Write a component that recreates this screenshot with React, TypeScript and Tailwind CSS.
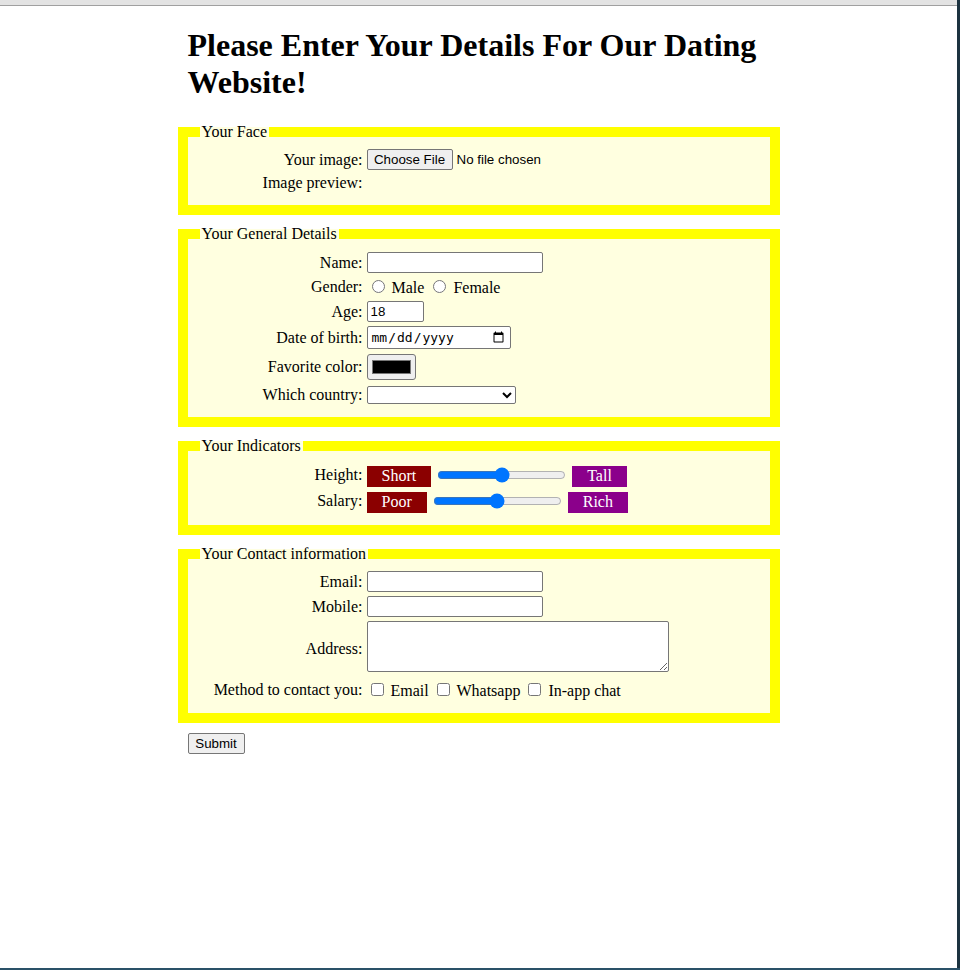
import React from "react";

const textInput =
  "h-[21px] w-[176px] rounded-[2px] border border-[#767676] bg-white px-[3px] font-['Liberation_Sans',Arial,sans-serif] text-[13.33px] text-black outline-none";

function Section({ title, children }: { title: string; children: React.ReactNode }) {
  return (
    <fieldset className="mx-[2px] mb-[10px] border-[10px] border-[#ffff00] bg-[#ffffe0] px-[12px] pt-[5.6px] pb-[10px]">
      <legend className="px-[2px]">{title}</legend>
      <div className="grid grid-cols-[160px_1fr] items-center gap-[4px] p-[3px]">{children}</div>
    </fieldset>
  );
}

function Label({ children }: { children: React.ReactNode }) {
  return <label className="text-right">{children}</label>;
}

export default function App() {
  return (
    <div className="flex h-[970px] w-[960px] flex-col overflow-hidden bg-white font-['Liberation_Serif','Times_New_Roman',serif] text-[16px] leading-[normal] text-black">
      <div className="flex min-h-0 flex-1">
        <div className="flex min-w-0 flex-1 flex-col">
          <div className="h-[6px] shrink-0 border-b border-[#a0a0a0] bg-[#e3e3e3]" />
          <div className="flex-1">
            <div className="mx-auto w-[606px]">
              <h1 className="my-[21.44px] pl-[12px] text-[32px] font-bold">
                Please Enter Your Details For Our Dating Website!
              </h1>
              <form onSubmit={(e) => e.preventDefault()}>
                <Section title="Your Face">
                  <Label>Your image:</Label>
                  <div className="flex h-[21px] items-center">
                    <input
                      type="file"
                      className="font-['Liberation_Sans',Arial,sans-serif] text-[13.33px] text-black file:mr-[4px] file:h-[21px] file:w-[86px] file:rounded-[2px] file:border file:border-[#767676] file:bg-[#efefef] file:px-[6px] file:text-black"
                    />
                  </div>
                  <Label>Image preview:</Label>
                  <div />
                </Section>

                <Section title="Your General Details">
                  <Label>Name:</Label>
                  <div className="flex items-center">
                    <input type="text" className={textInput} />
                  </div>
                  <Label>Gender:</Label>
                  <div>
                    <input type="radio" name="gender" className="mt-[3px] mr-[3px] ml-[5px]" /> Male{" "}
                    <input type="radio" name="gender" className="mt-[3px] mr-[3px] ml-[5px]" /> Female
                  </div>
                  <Label>Age:</Label>
                  <div className="flex items-center">
                    <input
                      type="number"
                      defaultValue={18}
                      className="h-[21px] w-[57px] rounded-[2px] border border-[#767676] bg-white px-[3px] font-['Liberation_Sans',Arial,sans-serif] text-[13.33px] text-black outline-none"
                    />
                  </div>
                  <Label>Date of birth:</Label>
                  <div className="flex h-[23px] items-center">
                    <input
                      type="date"
                      className="h-[23px] w-[144px] rounded-[2px] border border-[#767676] bg-white px-[3px] font-['DejaVu_Sans_Mono','Liberation_Mono',monospace] text-[13px] text-black outline-none"
                    />
                  </div>
                  <Label>Favorite color:</Label>
                  <div className="flex h-[28px] items-center">
                    <input
                      type="color"
                      defaultValue="#000000"
                      className="h-[26px] min-h-[26px] w-[49px] rounded-[3px] border border-[#767676] bg-[#efefef] px-[2px] py-px"
                    />
                  </div>
                  <Label>Which country:</Label>
                  <div className="flex h-[19px] items-center">
                    <select className="h-[18px] w-[149px] rounded-[2px] border border-[#767676] bg-white font-['Liberation_Sans',Arial,sans-serif] text-[13.33px] text-black outline-none">
                      <option value=""></option>
                      <option value="us">United States</option>
                      <option value="uk">United Kingdom</option>
                      <option value="in">India</option>
                      <option value="ca">Canada</option>
                    </select>
                  </div>
                </Section>

                <Section title="Your Indicators">
                  <Label>Height:</Label>
                  <div className="flex h-[22px] items-center gap-[4px]">
                    <span className="mt-[2px] inline-flex h-[21px] items-center self-start bg-[#8b0000] px-[15px] text-white">Short</span>
                    <input type="range" defaultValue={50} className="mx-[2px] w-[129px]" />
                    <span className="mt-[2px] inline-flex h-[21px] items-center self-start bg-[#8b008b] px-[15px] text-white">Tall</span>
                  </div>
                  <Label>Salary:</Label>
                  <div className="flex h-[22px] items-center gap-[4px]">
                    <span className="mt-[2px] inline-flex h-[21px] items-center self-start bg-[#8b0000] px-[15px] text-white">Poor</span>
                    <input type="range" defaultValue={50} className="mx-[2px] w-[129px]" />
                    <span className="mt-[2px] inline-flex h-[21px] items-center self-start bg-[#8b008b] px-[15px] text-white">Rich</span>
                  </div>
                </Section>

                <Section title="Your Contact information">
                  <Label>Email:</Label>
                  <div className="flex items-center">
                    <input type="email" className={textInput} />
                  </div>
                  <Label>Mobile:</Label>
                  <div className="flex items-center">
                    <input type="tel" className={textInput} />
                  </div>
                  <Label>Address:</Label>
                  <div className="flex h-[55px] items-start">
                    <textarea className="h-[51px] w-[302px] resize rounded-[2px] border border-[#767676] bg-white px-[2px] font-['Liberation_Mono',monospace] text-[13.33px] text-black outline-none" />
                  </div>
                  <Label>Method to contact you:</Label>
                  <div>
                    <input type="checkbox" className="my-[3px] mr-[3px] ml-[4px]" /> Email{" "}
                    <input type="checkbox" className="my-[3px] mr-[3px] ml-[4px]" /> Whatsapp{" "}
                    <input type="checkbox" className="my-[3px] mr-[3px] ml-[4px]" /> In-app chat
                  </div>
                </Section>

                <div className="flex pl-[12px]">
                  <button
                    type="submit"
                    className="h-[21px] w-[57px] rounded-[2px] border border-[#767676] bg-[#efefef] font-['Liberation_Sans',Arial,sans-serif] text-[13.33px] text-black"
                  >
                    Submit
                  </button>
                </div>
              </form>
            </div>
          </div>
        </div>
        <div className="w-[3px] shrink-0 bg-[#1c3340]" />
      </div>
      <div className="h-[2px] shrink-0 bg-[#2a5168]" />
    </div>
  );
}
